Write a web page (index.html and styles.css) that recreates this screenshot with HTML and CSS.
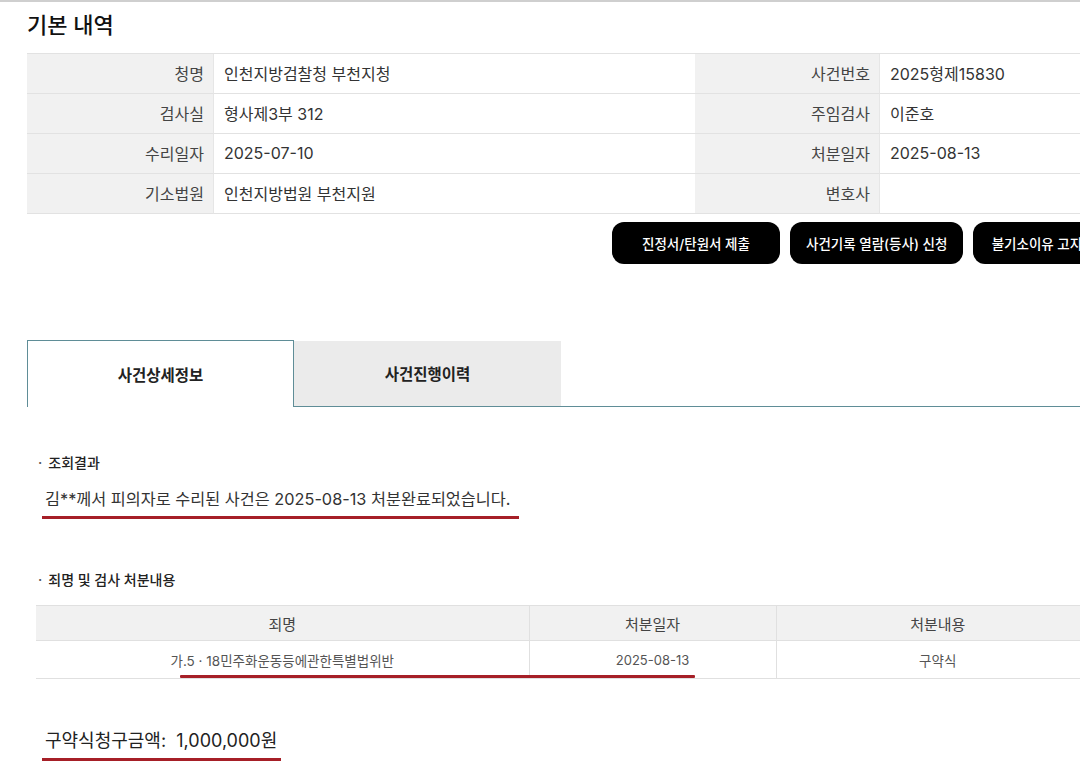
FILE: index.html
```html
<!DOCTYPE html>
<html lang="ko">
<head>
<meta charset="utf-8">
<link rel="stylesheet" href="styles.css">
</head>
<body>
<div class="topline"></div>
<main class="wrap">
  <h2 class="title">기본 내역</h2>
  <div class="info">
    <div class="lbl">청명</div><div class="val">인천지방검찰청 부천지청</div>
    <div class="lbl">사건번호</div><div class="val">2025형제15830</div>
    <div class="lbl">검사실</div><div class="val">형사제3부 312</div>
    <div class="lbl">주임검사</div><div class="val">이준호</div>
    <div class="lbl">수리일자</div><div class="val">2025-07-10</div>
    <div class="lbl">처분일자</div><div class="val">2025-08-13</div>
    <div class="lbl">기소법원</div><div class="val">인천지방법원 부천지원</div>
    <div class="lbl">변호사</div><div class="val"></div>
  </div>
  <div class="btns">
    <button class="btn">진정서/탄원서 제출</button>
    <button class="btn">사건기록 열람(등사) 신청</button>
    <button class="btn">불기소이유 고지서 열람</button>
  </div>

  <div class="tabs">
    <div class="tab active">사건상세정보</div>
    <div class="tab">사건진행이력</div>
    <div class="tab-rest"></div>
  </div>

  <section class="sec">
    <h3 class="sub">조회결과</h3>
    <p class="result"><span class="mark">김**께서 피의자로 수리된 사건은 2025-08-13 처분완료되었습니다.</span></p>

    <h3 class="sub sub2">죄명 및 검사 처분내용</h3>
    <div class="tbl-wrap">
      <table class="tbl">
        <thead>
          <tr><th class="c1">죄명</th><th class="c2">처분일자</th><th class="c3">처분내용</th></tr>
        </thead>
        <tbody>
          <tr><td>가.5 · 18민주화운동등에관한특별법위반</td><td class="date">2025-08-13</td><td>구약식</td></tr>
        </tbody>
      </table>
      <div class="row-mark"></div>
    </div>

    <p class="amount"><span class="mark mark-amt">구약식청구금액:&nbsp; 1,000,000원</span></p>
  </section>
</main>
</body>
</html>
```

FILE: styles.css
```css
* { box-sizing: border-box; }
html, body {
  margin: 0;
  padding: 0;
  background: #fff;
  overflow: hidden;
}
body {
  font-family: "Inter", "Noto Sans CJK KR", sans-serif;
  color: #222;
  width: 1080px;
  height: 764px;
}
.topline {
  height: 2px;
  background: #cfcfcf;
}
.wrap {
  width: 1200px;
  padding-left: 27px;
}
.title {
  margin: 8px 0 0;
  font-size: 22px;
  line-height: 30px;
  font-weight: 500;
  color: #111;
}
.info {
  margin-top: 13px;
  display: grid;
  grid-template-columns: 187px 481px 185px 220px;
  border-top: 1px solid #e2e2e2;
}
.info > div {
  height: 40px;
  border-bottom: 1px solid #e2e2e2;
  display: flex;
  align-items: center;
  font-size: 16px;
  padding-bottom: 2px;
}
.lbl {
  background: #f1f1f1;
  justify-content: flex-end;
  padding-right: 9px;
  color: #444;
  border-right: 1px solid #e6e6e6;
}
.val {
  padding-left: 10px;
  color: #333;
}
.btns {
  display: flex;
  gap: 10px;
  margin-top: 8px;
  padding-left: 585px;
}
.btn {
  height: 42px;
  min-width: 168px;
  padding: 0 16px;
  border: none;
  border-radius: 12px;
  background: #000;
  color: #fff;
  font-family: inherit;
  font-size: 13.5px;
  font-weight: 500;
  white-space: nowrap;
  flex: none;
}
.tabs {
  display: flex;
  margin-top: 76px;
  height: 67px;
}
.tab {
  width: 267px;
  display: flex;
  align-items: center;
  justify-content: center;
  font-size: 15.5px;
  font-weight: 700;
  color: #222;
}
.tab.active {
  border: 1px solid #5f8d97;
  border-bottom: none;
  background: #fff;
}
.tab:not(.active) {
  background: #ebebeb;
  border-bottom: 1px solid #5f8d97;
  margin-top: 1px;
  padding-bottom: 2px;
}
.tab-rest {
  flex: 1;
  border-bottom: 1px solid #5f8d97;
}
.sec {
  padding-left: 9px;
}
.sub {
  margin: 46px 0 0;
  font-size: 14px;
  line-height: 20px;
  font-weight: 500;
  color: #222;
  padding-left: 2px;
}
.sub::before {
  content: "·";
  margin-right: 6px;
  color: #555;
}
.result {
  margin: 14px 0 0;
  padding-left: 9px;
  font-size: 16.3px;
  line-height: 24px;
  color: #333;
}
.mark {
  display: inline-block;
  margin-left: -3px;
  padding: 0 9px 5px 3px;
  border-bottom: 3px solid #a61f27;
}
.sub2 {
  margin-top: 51px;
}
.tbl-wrap {
  position: relative;
  margin-top: 15px;
  width: 1064px;
}
.tbl {
  width: 100%;
  border-collapse: collapse;
  table-layout: fixed;
}
.tbl th, .tbl td {
  text-align: center;
  border: 1px solid #e0e0e0;
}
.tbl th {
  height: 35px;
  background: #f1f1f1;
  font-size: 15px;
  font-weight: 400;
  color: #444;
}
.tbl td {
  height: 38px;
  font-size: 13.5px;
  color: #555;
}
.tbl td.date {
  font-size: 13px;
}
.tbl th:first-child, .tbl td:first-child { border-left: none; }
.c1 { width: 493px; }
.c2 { width: 247px; }
.row-mark {
  position: absolute;
  left: 144px;
  width: 515px;
  top: 70px;
  height: 3px;
  background: #a61f27;
  border-radius: 1px;
}
.amount {
  margin: 50px 0 0;
  padding-left: 9px;
  font-size: 18px;
  line-height: 24px;
  color: #222;
}
.mark-amt {
  padding-right: 4px;
  padding-bottom: 5px;
}
```
